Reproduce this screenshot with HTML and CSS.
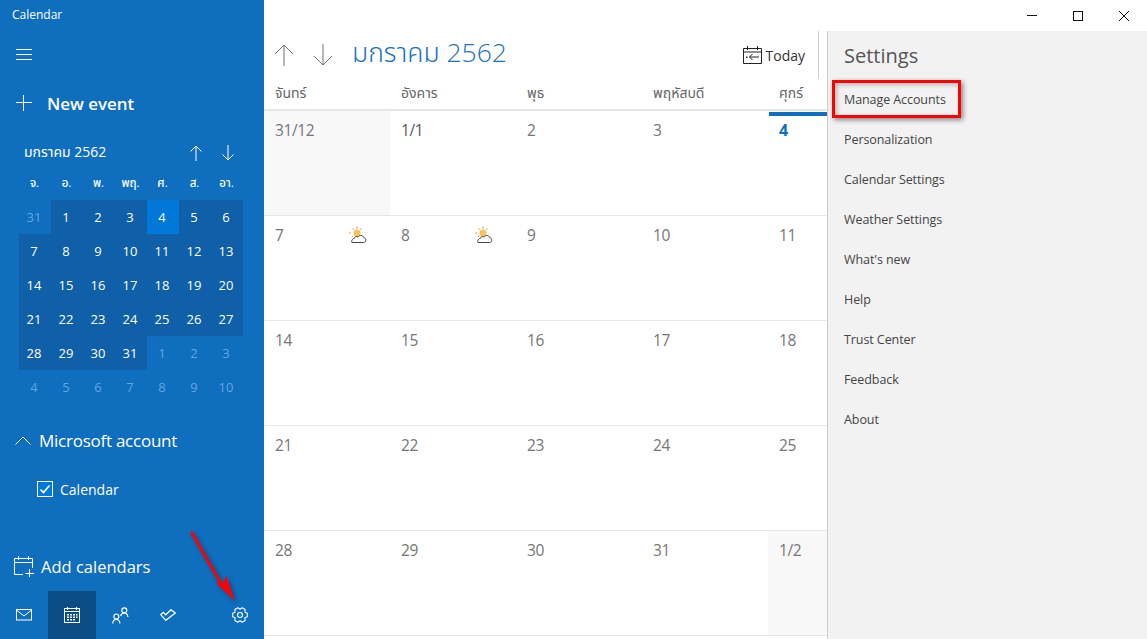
FILE: index.html
```html
<!DOCTYPE html>
<html lang="th">
<head>
<meta charset="utf-8">
<title>Calendar</title>
<link rel="stylesheet" href="styles.css">
</head>
<body>
<div class="app">
  <aside class="sidebar">
    <div class="app-title">Calendar</div>
    <button class="hamburger" aria-label="Menu"><svg width="16" height="12" viewBox="0 0 16 12"><path d="M0 .5h16M0 5.500h16M0 10.500h16" stroke="#fff" fill="none"/></svg></button>
    <div class="new-event">
      <svg width="16" height="16" viewBox="0 0 16 16"><path d="M7.500 0v16M0 7.500h16" stroke="#fff" fill="none"/></svg>
      <span>New event</span>
    </div>
    <div class="mini-head">
      <span class="mini-title">มกราคม 2562</span>
      <svg class="mini-arrow" width="12" height="16" viewBox="0 0 12 16"><path d="M6 16V1M.5 6.500L6 1l5.500 5.500" stroke="#fff" fill="none"/></svg>
      <svg class="mini-arrow" width="12" height="16" viewBox="0 0 12 16"><path d="M6 0v15M.5 9.500L6 15l5.500-5.500" stroke="#fff" fill="none"/></svg>
    </div>
    <div class="mini-grid">
      <span class="dow">จ.</span><span class="dow">อ.</span><span class="dow">พ.</span><span class="dow">พฤ.</span><span class="dow">ศ.</span><span class="dow">ส.</span><span class="dow">อา.</span>
      <span class="d off">31</span><span class="d cur">1</span><span class="d cur">2</span><span class="d cur">3</span><span class="d now">4</span><span class="d cur">5</span><span class="d cur">6</span>
      <span class="d cur">7</span><span class="d cur">8</span><span class="d cur">9</span><span class="d cur">10</span><span class="d cur">11</span><span class="d cur">12</span><span class="d cur">13</span>
      <span class="d cur">14</span><span class="d cur">15</span><span class="d cur">16</span><span class="d cur">17</span><span class="d cur">18</span><span class="d cur">19</span><span class="d cur">20</span>
      <span class="d cur">21</span><span class="d cur">22</span><span class="d cur">23</span><span class="d cur">24</span><span class="d cur">25</span><span class="d cur">26</span><span class="d cur">27</span>
      <span class="d cur">28</span><span class="d cur">29</span><span class="d cur">30</span><span class="d cur">31</span><span class="d off">1</span><span class="d off">2</span><span class="d off">3</span>
      <span class="d off">4</span><span class="d off">5</span><span class="d off">6</span><span class="d off">7</span><span class="d off">8</span><span class="d off">9</span><span class="d off">10</span>
    </div>
    <div class="account">
      <svg width="16" height="9" viewBox="0 0 16 9"><path d="M.5 8.500L8 1l7.500 7.500" stroke="#fff" fill="none"/></svg>
      <span>Microsoft account</span>
    </div>
    <div class="cal-item">
      <svg width="16" height="16" viewBox="0 0 16 16"><rect x=".5" y=".5" width="15" height="15" fill="#0078d7" stroke="#fff"/><path d="M3.500 8.500l3 3 6-7" stroke="#fff" stroke-width="1.700" fill="none"/></svg>
      <span>Calendar</span>
    </div>
    <div class="add-cal">
      <svg width="22" height="22" viewBox="0 0 22 22" fill="none" stroke="#fff"><path d="M10 19.500H1.500V3.500h18V13M1.500 7.500h18M5.500 1v4M15.500 1v4M16.500 14v8M12.500 18.500h8.500"/></svg>
      <span>Add calendars</span>
    </div>
    <nav class="bottom-nav">
      <div class="nav-btn"><svg width="16" height="12" viewBox="0 0 16 12" fill="none" stroke="#fff"><rect x=".5" y=".5" width="15" height="10.500"/><path d="M.5 1L8 7l7.500-6"/></svg></div>
      <div class="nav-btn active"><svg width="16" height="16" viewBox="0 0 16 16"><rect x=".5" y="1.500" width="15" height="14" fill="none" stroke="#fff"/><path d="M.5 4.500h15M3.500 0v3M12.500 0v3" stroke="#fff" fill="none" stroke-width="1.200"/><path d="M3 7h2v1.500H3zM6 7h2v1.500H6zM9 7h2v1.500H9zM12 7h1.500v1.500H12zM3 9.500h2V11H3zM6 9.500h2V11H6zM9 9.500h2V11H9zM12 9.500h1.500V11H12zM3 12h2v1.500H3zM6 12h2v1.500H6zM9 12h2v1.500H9z" fill="#fff"/></svg></div>
      <div class="nav-btn"><svg width="17" height="17" viewBox="0 0 17 17" fill="none" stroke="#fff" stroke-width="1.200"><circle cx="4.300" cy="9.500" r="2.500"/><path d="M.7 16.500c.1-2.500 1.500-4 3.600-4s3.500 1.500 3.600 4"/><circle cx="12.300" cy="3.300" r="2.500"/><path d="M8.500 9c.6-2 2-3 3.800-3s3.200 1.300 3.700 4"/></svg></div>
      <div class="nav-btn"><svg width="16" height="12" viewBox="0 0 16 12" fill="none" stroke="#fff" stroke-width="1.200"><path d="M.7 5.700l2.500-2.400 2.600 2.500L11 .7 15.300 4 5.800 11.300z"/></svg></div>
      <div class="nav-spacer"></div>
      <div class="nav-btn"><svg width="16" height="16" viewBox="0 0 16 16" fill="none" stroke="#fff" stroke-width="1.100" stroke-linejoin="round"><path d="M15.310 6.310v3.380L12.940 10.850l.17 2.630-2.920 1.690L8 13.700l-2.190 1.470-2.920-1.690.17-2.630-2.370-1.160V6.310L3.060 5.150l-.17-2.630L5.810.83 8 2.300 10.190.83l2.920 1.690-.17 2.630z"/><circle cx="8" cy="8" r="2.500"/></svg></div>
    </nav>
  </aside>

  <div class="right">
    <header class="winbar">
      <svg width="10" height="1" viewBox="0 0 10 1"><path d="M0 .5h10" stroke="#111"/></svg>
      <svg width="10" height="10" viewBox="0 0 10 10"><rect x=".5" y=".5" width="9" height="9" fill="none" stroke="#111"/></svg>
      <svg width="10" height="10" viewBox="0 0 10 10"><path d="M0 0l10 10M10 0L0 10" stroke="#111" fill="none"/></svg>
    </header>
    <div class="content">
      <main class="main">
        <div class="toolbar">
          <svg class="tool-arrow" width="20" height="22" viewBox="0 0 20 22"><path d="M10 22V1M1 10l9-9 9 9" stroke="#707070" fill="none"/></svg>
          <svg class="tool-arrow" width="20" height="22" viewBox="0 0 20 22"><path d="M10 0v21M1 12l9 9 9-9" stroke="#707070" fill="none"/></svg>
          <h1 class="month">มกราคม 2562</h1>
          <div class="today">
            <svg width="19" height="18" viewBox="0 0 19 18" fill="none" stroke="#222"><path d="M.5 2.500h18v15H.5zM.5 6h18M4.500 0v4M14.500 0v4M16 11H6.500M9.500 8l-3 3 3 3"/><path d="M3 10.500h1.500v1.500H3z" fill="#222" stroke="none"/></svg>
            <span>Today</span>
          </div>
          <div class="tool-sep"></div>
        </div>
        <div class="week-head">
          <span>จันทร์</span><span>อังคาร</span><span>พุธ</span><span>พฤหัสบดี</span><span>ศุกร์</span>
        </div>
        <div class="month-grid">
          <div class="cell past">31/12</div><div class="cell strong">1/1</div><div class="cell">2</div><div class="cell">3</div><div class="cell current">4</div>
          <div class="cell">7<svg class="wx" viewBox="0 0 18 18"><use href="#sun"/></svg></div><div class="cell">8<svg class="wx" viewBox="0 0 18 18"><use href="#sun"/></svg></div><div class="cell">9</div><div class="cell">10</div><div class="cell">11</div>
          <div class="cell">14</div><div class="cell">15</div><div class="cell">16</div><div class="cell">17</div><div class="cell">18</div>
          <div class="cell">21</div><div class="cell">22</div><div class="cell">23</div><div class="cell">24</div><div class="cell">25</div>
          <div class="cell">28</div><div class="cell">29</div><div class="cell">30</div><div class="cell">31</div><div class="cell past">1/2</div>
        </div>
      </main>
      <section class="settings">
        <h2>Settings</h2>
        <ul>
          <li>Manage Accounts</li><li>Personalization</li><li>Calendar Settings</li><li>Weather Settings</li><li>What's new</li><li>Help</li><li>Trust Center</li><li>Feedback</li><li>About</li>
        </ul>
      </section>
    </div>
  </div>
</div>

<div class="red-box"></div>
<svg class="red-arrow" width="50" height="74" viewBox="0 0 50 74"><path d="M2 2L33 56" stroke="#f00" stroke-width="3" fill="none" stroke-linecap="round"/><path d="M45 70L26 52l8-1 2-7z" fill="#f00"/></svg>

<svg width="0" height="0" class="defs">
  <symbol id="sun" viewBox="0 0 18 18">
    <circle cx="8" cy="7" r="3.500" fill="#ffc15a"/>
    <path d="M8 .5v2.500M2 7H.2M3.500 2.500l1.500 1.500M12.500 2.500L11 4M2.800 11l1.500-1" stroke="#f79a3a" fill="none"/>
    <path d="M3 16.500h11.500c3 0 3-4.500.3-4.800-.7-2.500-4.300-3.200-5.800-.7-1.500-1-3.500-.2-3.600 1.400-2.700 0-3.200 4.100-2.400 4.100z" fill="#fff" stroke="#444"/>
  </symbol>
</svg>
</body>
</html>
```

FILE: styles.css
```css
* { box-sizing: border-box; }
html, body { margin: 0; height: 100%; overflow: hidden; }
body {
  font-family: "Open Sans", "Noto Sans", "Noto Sans Thai", "Noto Sans Thai UI", "DejaVu Sans", sans-serif;
  background: #fff;
  color: #444;
}
.app { display: flex; width: 1147px; height: 639px; }

.sidebar {
  width: 264px; flex: none; height: 639px;
  background: #0f6ebe; color: #fff;
  display: flex; flex-direction: column;
}
.app-title { font-size: 12px; line-height: 16px; padding: 7px 0 0 12px; height: 31px; }
.hamburger { background: none; border: 0; padding: 0; margin: 18px 0 0 16px; width: 16px; height: 12px; display: block; line-height: 0; }
.new-event { display: flex; align-items: center; gap: 15px; margin: 32px 0 0 16px; height: 20px; }
.new-event span { font-size: 17px; font-weight: 600; letter-spacing: -.05px; }
.mini-head { display: flex; align-items: center; margin: 30px 0 0 24px; height: 20px; padding-right: 30px; gap: 20px; }
.mini-title { font-size: 14px; flex: 1; padding-bottom: 2px; }
.mini-grid { display: grid; grid-template-columns: repeat(7, 32px); grid-template-rows: 30px; grid-auto-rows: 34px; margin: 7px 0 0 19px; width: 224px; }
.dow { font-size: 11.500px; font-weight: 500; display: flex; align-items: center; justify-content: center; padding: 0 1px 4px 0; }
.d { font-size: 13px; display: flex; align-items: center; justify-content: center; padding-right: 2px; }
.d.cur { background: #0f60a8; }
.d.off { color: #62a6e2; }
.d.now { background: #0078d7; }
.account { display: flex; align-items: center; gap: 8px; margin: 23px 0 0 15px; height: 26px; }
.account span { font-size: 17px; letter-spacing: -.25px; }
.cal-item { display: flex; align-items: center; gap: 7px; margin: 25px 0 0 37px; height: 22px; }
.cal-item span { font-size: 14px; }
.add-cal { display: flex; align-items: center; gap: 6px; margin: 53px 0 0 13px; height: 26px; }
.add-cal span { font-size: 16.500px; }
.bottom-nav { display: flex; margin-top: auto; height: 48px; }
.nav-btn { width: 48px; height: 48px; display: flex; align-items: center; justify-content: center; }
.nav-btn.active { background: #0b4c85; }
.nav-spacer { flex: 1; }

.right { flex: 1; display: flex; flex-direction: column; min-width: 0; }
.winbar { height: 31px; display: flex; align-items: center; justify-content: flex-end; gap: 36px; padding-right: 18px; }
.content { flex: 1; display: flex; min-height: 0; }

.main { width: 564px; flex: none; border-right: 1px solid #ccc; overflow: hidden; }
.toolbar { display: flex; align-items: center; height: 48px; padding-left: 10px; }
.tool-arrow { margin-right: 19px; }
.month { font-size: 26.500px; font-weight: 300; color: #1a72c0; margin: 0; padding-bottom: 2px; flex: 1; }
.today { display: flex; align-items: center; gap: 4px; font-size: 14px; color: #333; margin-right: 13px; }
.tool-sep { width: 1px; height: 48px; background: #ccc; margin-right: 8px; }
.week-head { display: grid; grid-template-columns: repeat(4, 126px) 59px; height: 32px; border-bottom: 2px solid #e6e6e6; }
.week-head span { font-size: 14px; color: #666; padding: 4px 0 0 11px; }
.month-grid { display: grid; grid-template-columns: repeat(4, 126px) 59px; grid-auto-rows: 105px; }
.cell { position: relative; border-bottom: 1px solid #e6e6e6; font-size: 15.500px; letter-spacing: -.4px; color: #767676; padding: 8px 0 0 11px; }
.cell.past { background: #f8f8f8; }
.cell.strong { color: #555; font-weight: 500; }
.cell.current { color: #106ebe; font-weight: 700; padding-left: 11px; font-size: 16px; }
.cell.current::before { content: ""; position: absolute; left: 1px; right: 0; top: 1px; height: 4px; background: #106ebe; }
.wx { position: absolute; top: 10px; left: 85px; width: 18px; height: 18px; }
.defs { position: absolute; }

.settings { flex: 1; background: #f2f2f2; padding-left: 16px; }
.settings h2 { font-size: 20px; font-weight: 400; color: #555; margin: 11px 0 0; line-height: 28px; }
.settings ul { list-style: none; margin: 10px 0 0; padding: 0; }
.settings li { font-size: 12.500px; letter-spacing: -.08px; line-height: 40px; color: #444; height: 40px; }

.red-box { position: absolute; left: 832px; top: 80px; width: 129px; height: 38px; border: 3px solid #f00; box-shadow: 2px 2px 5px rgba(0,0,0,.45), inset 2px 2px 4px rgba(0,0,0,.25); }
.red-arrow { position: absolute; left: 190px; top: 531px; filter: drop-shadow(2px 2px 2px rgba(0,0,0,.35)); }
```
